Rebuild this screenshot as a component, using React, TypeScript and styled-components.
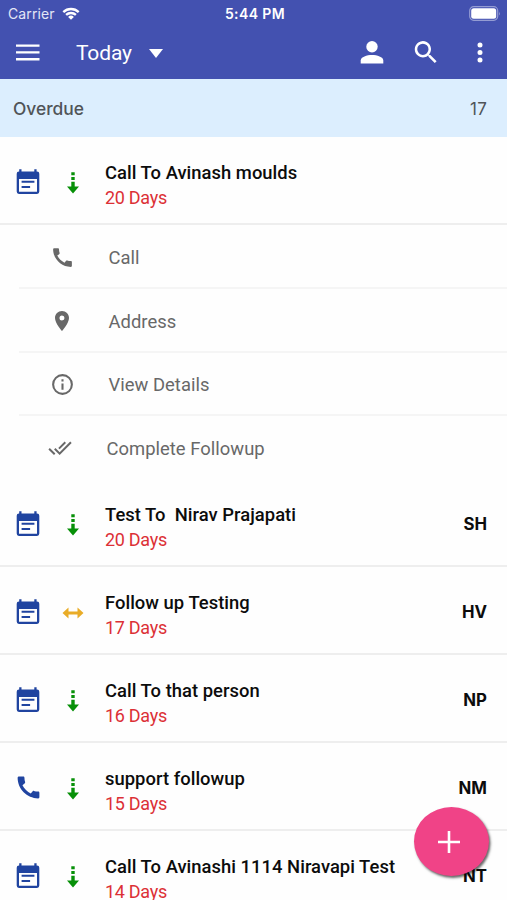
import React from "react";
import styled, { createGlobalStyle } from "styled-components";

const Global = createGlobalStyle`
  * { box-sizing: border-box; }
  body { margin: 0; background: #fff; font-family: Roboto, sans-serif; overflow: hidden; }
`;

const Screen = styled.div`
  position: relative;
  width: 507px;
  height: 900px;
  overflow: hidden;
  background: #fefefe;
`;

const Header = styled.header`
  height: 79px;
  background: #4351b0;
  color: #fff;
`;

const StatusBar = styled.div`
  display: grid;
  grid-template-columns: 1fr auto 1fr;
  align-items: center;
  height: 27px;
  padding: 0 6px 0 8px;
  font-family: Inter, sans-serif;
  font-size: 14px;
`;

const Carrier = styled.div`
  display: flex;
  align-items: center;
  gap: 7px;
  color: #e3e6f6;
  letter-spacing: 0.1px;
`;

const Clock = styled.div`
  padding-left: 1px;
  font-weight: 600;
  font-size: 14px;
  letter-spacing: 0.4px;
`;

const BatterySlot = styled.div`
  display: flex;
  justify-content: flex-end;
`;

const Toolbar = styled.div`
  display: flex;
  align-items: center;
  height: 52px;
  padding: 0 12px 0 16px;
`;

const Title = styled.h1`
  margin: 0 17px 0 36px;
  font-size: 21px;
  font-weight: 400;
  line-height: 26px;
  letter-spacing: -0.15px;
`;

const Actions = styled.div`
  display: flex;
  align-items: center;
  gap: 24px;
  margin-left: auto;
`;

const Glyph = styled.svg<{ $w: number; $h?: number }>`
  display: block;
  flex: none;
  width: ${(p) => p.$w}px;
  height: ${(p) => p.$h ?? p.$w}px;
  fill: currentColor;
`;

const SectionBar = styled.div`
  display: flex;
  align-items: center;
  justify-content: space-between;
  height: 58px;
  padding: 1px 20px 0 13px;
  background: #dceefe;
  color: #505458;
  font-family: Inter, sans-serif;
  font-size: 17.4px;
  font-weight: 500;
`;

const Count = styled.span`
  font-size: 17px;
  font-weight: 400;
  letter-spacing: 0.2px;
`;

const Row = styled.div<{ $first?: boolean }>`
  display: flex;
  align-items: center;
  height: ${(p) => (p.$first ? 87.5 : 88)}px;
  padding: 4px 20px 0 14px;
  border-bottom: 2px solid #eeeeee;
`;

const KindSlot = styled.div`
  width: 28px;
  color: #2044a0;
`;

const PrioritySlot = styled.div`
  display: flex;
  justify-content: center;
  width: 30px;
  padding-top: 2px;
  margin-left: 16px;
`;

const Texts = styled.div`
  flex: 1;
  margin-left: 17px;
  padding-top: 7px;
  white-space: pre;
`;

const Name = styled.div`
  font-size: 18.4px;
  line-height: 24px;
  font-weight: 500;
  letter-spacing: 0.03px;
  color: #0c0c0c;
`;

const Age = styled.div`
  font-size: 18px;
  line-height: 25px;
  letter-spacing: -0.3px;
  color: #dc3036;
`;

const Initials = styled.div`
  font-family: Inter, sans-serif;
  font-size: 16.8px;
  font-weight: 700;
  color: #0c0c0c;
`;

const SubList = styled.div`
  height: 254px;
  padding: 1.5px 0 0 19px;
`;

const SubRow = styled.div<{ $wide?: boolean }>`
  display: flex;
  align-items: center;
  height: 63.4px;
  padding-top: 2px;
  border-bottom: 2px solid #f5f5f5;
  color: #686868;
  font-size: 18.4px;
  letter-spacing: 0.03px;
  gap: ${(p) => (p.$wide ? 30.5 : 32.5)}px;
  &:last-child { border-bottom-color: transparent; padding-top: 3px; }
`;

const SubIcon = styled.div<{ $wide?: boolean }>`
  display: flex;
  justify-content: center;
  width: 28px;
  padding-right: ${(p) => (p.$wide ? 5 : 0)}px;
  margin-left: 29px;
`;

const Fab = styled.button`
  position: absolute;
  left: 414px;
  top: 807px;
  display: flex;
  align-items: center;
  justify-content: center;
  width: 75px;
  height: 69px;
  padding: 0 5px 0 0;
  border: 0;
  border-radius: 50%;
  background: #f04387;
  color: #fff;
  box-shadow: 1.500px 2px 2.500px rgba(0, 0, 0, 0.6);
`;

const EventIcon = () => (
  <Glyph $w={28} viewBox="0 0 28 28">
    <path
      fillRule="evenodd"
      d="M5.200 1.200h2.300v2.200h12.800V1.200h2.300v2.200h.4A2.300 2.300 0 0 1 25.300 5.700v17.900A2.300 2.300 0 0 1 23 25.900H5a2.300 2.300 0 0 1-2.300-2.300V5.700A2.300 2.300 0 0 1 5 3.400h.2zM5 10.900v12.800h18V10.900z"
    />
    <path d="M7.600 12.800h12.800v2H7.600zM7.600 18h8.500v2H7.600z" />
  </Glyph>
);

const PhoneIcon = ({ size }: { size: number }) => (
  <Glyph $w={size} viewBox="0 0 24 24">
    <path d="M20.010 15.380c-1.230 0-2.420-.2-3.530-.56-.35-.12-.74-.03-1.010.24l-1.570 1.970c-2.830-1.350-5.480-3.900-6.890-6.830l1.950-1.660c.27-.28.35-.67.24-1.020-.37-1.110-.56-2.300-.56-3.530 0-.54-.45-.99-.99-.99H4.190C3.650 3 3 3.240 3 3.990 3 13.280 10.730 21 20.010 21c.71 0 .99-.63.99-1.180v-3.450c0-.54-.45-.99-.99-.99z" />
  </Glyph>
);

const LowIcon = () => (
  <Glyph $w={14} $h={24} viewBox="0 0 14 24" color="#079008">
    <path d="M5.300 1.200h3.400v3H5.300zM5.300 6h3.400v3H5.300zM5.300 10.800h3.400v4.800H13L7 22.600 1 15.600h4.300z" />
  </Glyph>
);

const MediumIcon = () => (
  <Glyph $w={22} $h={14} viewBox="0 0 22 14" color="#e9ac27">
    <path d="M.5 7l6-5.500v4h9v-4L21.500 7l-6 5.500v-4h-9v4z" />
  </Glyph>
);

const PinIcon = () => (
  <Glyph $w={24} viewBox="0 0 24 24">
    <path d="M12 2C8.130 2 5 5.130 5 9c0 5.250 7 13 7 13s7-7.750 7-13c0-3.870-3.130-7-7-7zm0 9.500a2.500 2.500 0 1 1 0-5 2.500 2.500 0 0 1 0 5z" />
  </Glyph>
);

const InfoIcon = () => (
  <Glyph $w={25} viewBox="0 0 24 24">
    <path d="M11 7h2v2h-2zm0 4h2v6h-2zm1-9a10 10 0 1 0 0 20 10 10 0 0 0 0-20zm0 18a8 8 0 1 1 0-16 8 8 0 0 1 0 16z" />
  </Glyph>
);

const DoneAllIcon = () => (
  <Glyph $w={24} viewBox="0 0 24 24">
    <path d="M18 7l-1.410-1.410-6.340 6.340 1.410 1.410L18 7zm4.240-1.410L11.660 16.170 7.480 12l-1.410 1.410L11.660 19l12-12-1.420-1.410zM.41 13.410L6 19l1.410-1.410L1.830 12 .41 13.410z" />
  </Glyph>
);

const subActions = [
  { label: "Call", icon: <PhoneIcon size={25} /> },
  { label: "Address", icon: <PinIcon /> },
  { label: "View Details", icon: <InfoIcon /> },
  { label: "Complete Followup", icon: <DoneAllIcon />, wide: true },
];

type Item = { name: string; days: number; initials?: string; phone?: boolean; medium?: boolean };

const first: Item = { name: "Call To Avinash moulds", days: 20 };
const rest: Item[] = [
  { name: "Test To  Nirav Prajapati", days: 20, initials: "SH" },
  { name: "Follow up Testing", days: 17, initials: "HV", medium: true },
  { name: "Call To that person", days: 16, initials: "NP" },
  { name: "support followup", days: 15, initials: "NM", phone: true },
  { name: "Call To Avinashi 1114 Niravapi Test", days: 14, initials: "NT" },
];

const FollowupRow = ({ item, lead }: { item: Item; lead?: boolean }) => (
  <Row $first={lead}>
    <KindSlot>{item.phone ? <PhoneIcon size={29} /> : <EventIcon />}</KindSlot>
    <PrioritySlot>{item.medium ? <MediumIcon /> : <LowIcon />}</PrioritySlot>
    <Texts>
      <Name>{item.name}</Name>
      <Age>{item.days} Days</Age>
    </Texts>
    {item.initials && <Initials>{item.initials}</Initials>}
  </Row>
);

export default function App() {
  return (
    <>
      <Global />
      <Screen>
        <Header>
          <StatusBar>
            <Carrier>
              Carrier
              <Glyph $w={18} $h={13} viewBox="0 0 18 13" color="#fff">
                <path d="M.5 4.200a12.400 12.400 0 0 1 17 0l-1.600 1.700a10 10 0 0 0-13.800 0zM3.300 7.100a8.300 8.300 0 0 1 11.400 0l-1.600 1.700a6 6 0 0 0-8.200 0zM6.100 9.900a4.200 4.200 0 0 1 5.800 0L9 12.700z" />
              </Glyph>
            </Carrier>
            <Clock>5:44 PM</Clock>
            <BatterySlot>
              <Glyph $w={32} $h={15} viewBox="0 0 32 15">
                <rect x="0.700" y="0.700" width="28" height="13.600" rx="4" fill="none" stroke="#949cd3" strokeWidth="1.200" />
                <rect x="2.200" y="2.300" width="25" height="10.400" rx="2.500" />
                <path d="M30 5.500q1.500 2 0 4z" fill="#949cd3" />
              </Glyph>
            </BatterySlot>
          </StatusBar>
          <Toolbar>
            <Glyph $w={24} $h={18} viewBox="0 0 24 18">
              <path d="M0 .5h23.500v2.300H0zM0 7.300h23.500v2.300H0zM0 14.100h23.500v2.300H0z" />
            </Glyph>
            <Title>Today</Title>
            <Glyph $w={14} $h={9} viewBox="0 0 14 9">
              <path d="M0 0h14L7 9z" />
            </Glyph>
            <Actions>
              <Glyph $w={30} $h={24} viewBox="-3 0 30 24">
                <circle cx="12" cy="5.800" r="5.700" />
                <path d="M.7 22.500v-3C.7 16 7 14.100 12 14.100S23.300 16 23.300 19.500v3z" />
              </Glyph>
              <Glyph $w={30} viewBox="0 0 24 24">
                <path d="M15.500 13.500h-.79l-.28-.27A6.500 6.500 0 1 0 13.730 13.930l.27.28v.79l5 4.990L20.490 18.500l-4.990-5zm-6 0a4.500 4.500 0 1 1 0-9 4.500 4.500 0 0 1 0 9z" />
              </Glyph>
              <Glyph $w={30} viewBox="0 0 24 24">
                <path d="M12 7.500a2 2 0 1 0 0-4 2 2 0 0 0 0 4zm0 2a2 2 0 1 0 0 4 2 2 0 0 0 0-4zm0 6a2 2 0 1 0 0 4 2 2 0 0 0 0-4z" />
              </Glyph>
            </Actions>
          </Toolbar>
        </Header>
        <SectionBar>
          Overdue
          <Count>17</Count>
        </SectionBar>
        <FollowupRow item={first} lead />
        <SubList>
          {subActions.map((a) => (
            <SubRow key={a.label} $wide={a.wide}>
              <SubIcon $wide={a.wide}>{a.icon}</SubIcon>
              {a.label}
            </SubRow>
          ))}
        </SubList>
        {rest.map((item) => (
          <FollowupRow key={item.name} item={item} />
        ))}
        <Fab aria-label="Add">
          <Glyph $w={22} viewBox="0 0 22 22">
            <path d="M9.700 0h2.600v9.700H22v2.600h-9.700V22H9.700v-9.700H0V9.700h9.700z" />
          </Glyph>
        </Fab>
      </Screen>
    </>
  );
}
